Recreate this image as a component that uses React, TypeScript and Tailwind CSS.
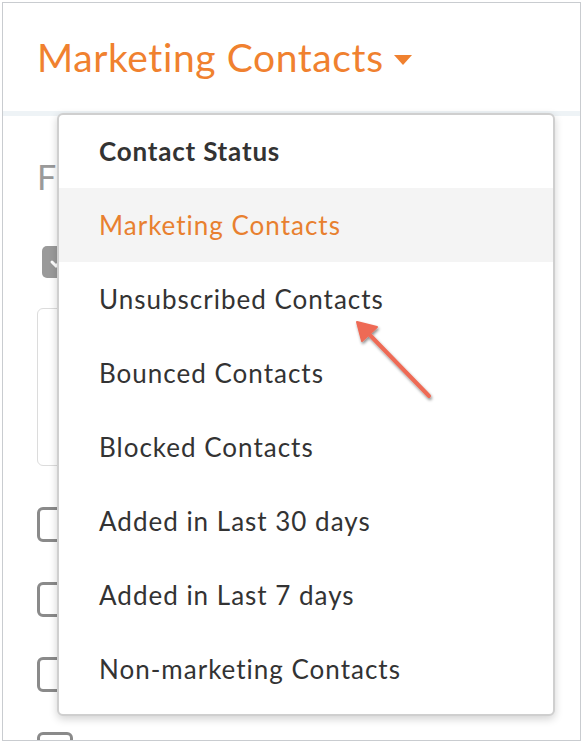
const ITEMS = [
  'Marketing Contacts',
  'Unsubscribed Contacts',
  'Bounced Contacts',
  'Blocked Contacts',
  'Added in Last 30 days',
  'Added in Last 7 days',
  'Non-marketing Contacts',
];

function Checkbox({ checked }: { checked?: boolean }) {
  if (checked) {
    return (
      <div className="flex h-[32px] w-[32px] items-center justify-center rounded-[5px] bg-[#9a9a9a]">
        <svg width="20" height="20" viewBox="0 0 20 20" fill="none" stroke="#fff" strokeWidth="3" strokeLinecap="round">
          <path d="M4 10l4 4 8-8" />
        </svg>
      </div>
    );
  }
  return <div className="h-[35px] w-[36px] rounded-[6px] border-[3px] border-[#8a8a8a] bg-white" />;
}

function Arrow() {
  return (
    <svg className="pointer-events-none absolute left-[340px] top-[310px]" width="110" height="110" viewBox="0 0 110 110">
      <defs>
        <filter id="sh" x="-30%" y="-30%" width="160%" height="160%">
          <feDropShadow dx="1" dy="2" stdDeviation="1.5" floodColor="#000" floodOpacity="0.45" />
        </filter>
      </defs>
      <g filter="url(#sh)">
        <path d="M89 86L26 21" stroke="#ee6a55" strokeWidth="4" strokeLinecap="round" />
        <path d="M17 12L37 17L22 31Z" fill="#ee6a55" stroke="#ee6a55" strokeWidth="2" strokeLinejoin="round" />
      </g>
    </svg>
  );
}

export default function App() {
  return (
    <div className="relative h-[744px] w-[583px] overflow-hidden bg-white p-[2px] font-['Lato','Liberation_Sans',sans-serif] [font-variant-ligatures:none]">
      <div className="h-[739px] overflow-hidden border border-[#c9ccd0] bg-white">
        <div className="flex h-[108px] items-center gap-[10px] pl-[34px]">
          <span className="text-[39px] leading-none tracking-[0.6px] text-[#f0812f]">Marketing Contacts</span>
          <svg width="18" height="10" viewBox="0 0 18 10" className="mt-[6px]">
            <path d="M0 0h18L9 10z" fill="#f0812f" />
          </svg>
        </div>
        <div className="h-[5px] bg-[#eef3f6]" />
        <div className="flex flex-col pl-[34px]">
          <p className="mt-[44px] text-[34px] leading-none text-[#9a9a9a]">F</p>
          <div className="mt-[52px] ml-[5px]">
            <Checkbox checked />
          </div>
          <div className="mt-[30px] h-[158px] w-[300px] rounded-[6px] border border-[#dcdcdc]" />
          <div className="mt-[41px] flex flex-col gap-[40px]">
            <Checkbox />
            <Checkbox />
            <Checkbox />
            <Checkbox />
          </div>
        </div>
      </div>

      <div className="absolute left-[57px] top-[113px] w-[498px] rounded-[6px] border-2 border-[#cfcfcf] bg-white pb-[8px] shadow-[0_3px_8px_rgba(0,0,0,0.18)]">
        <div className="flex h-[73px] items-center pl-[40px] text-[26px] font-bold tracking-[0.8px] text-[#333]">Contact Status</div>
        {ITEMS.map((item, i) => (
          <div
            key={item}
            className={
              i === 0
                ? 'flex h-[74px] items-center bg-[#f4f4f4] pl-[40px] text-[26px] tracking-[1px] text-[#e8802f]'
                : 'flex h-[74px] items-center pl-[40px] text-[26px] tracking-[1px] text-[#333]'
            }
          >
            {item}
          </div>
        ))}
      </div>

      <Arrow />
    </div>
  );
}
